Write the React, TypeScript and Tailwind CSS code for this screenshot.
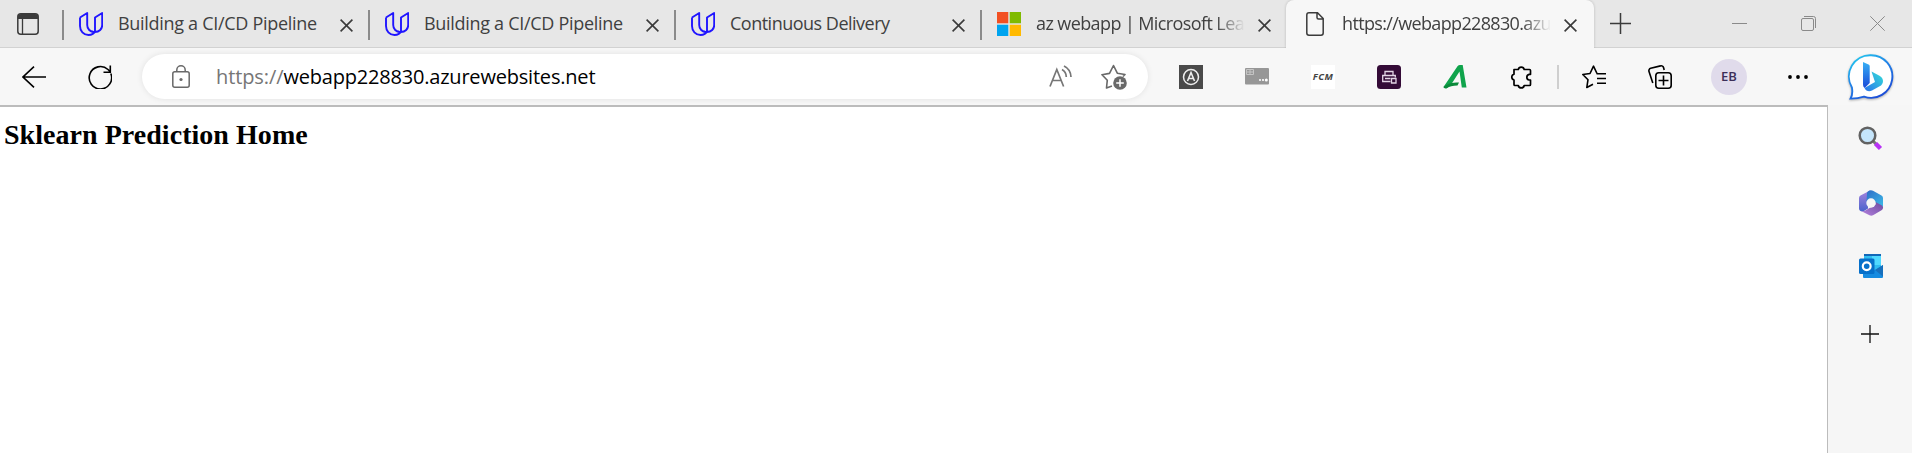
import React from "react";

const UI = "font-['Open_Sans','Noto_Sans',sans-serif]";

function Svg({ w, h, vb, className = "", children }: { w: number; h: number; vb?: string; className?: string; children: React.ReactNode }) {
  return (
    <svg width={w} height={h} viewBox={vb ?? `0 0 ${w} ${h}`} fill="none" className={`block shrink-0 ${className}`}>
      {children}
    </svg>
  );
}

function Udacity() {
  return (
    <Svg w={24} h={24}>
      <path
        d="M1 5.500 8.200 1V13c0 4 3 7 7 7M1 5.500V14c0 5 3.500 9 8.500 9 3.500 0 6-2 7.500-4.500M16 19.500V5.500L23.200 1V13c0 4-3 7-7.200 7-1 0-2-.2-3-.6"
        stroke="#2015ff"
        strokeWidth="1.900"
        strokeLinejoin="round"
      />
    </Svg>
  );
}

function Microsoft() {
  return (
    <Svg w={24} h={24}>
      <path d="M0 0h11.300v11.300H0z" fill="#f25022" />
      <path d="M12.700 0H24v11.300H12.700z" fill="#7fba00" />
      <path d="M0 12.700h11.300V24H0z" fill="#00a4ef" />
      <path d="M12.700 12.700H24V24H12.700z" fill="#ffb900" />
    </Svg>
  );
}

function CloseX() {
  return (
    <Svg w={13} h={13}>
      <path d="M.6.6l11.800 11.800M12.400.6.6 12.400" stroke="#3b3b3b" strokeWidth="1.600" />
    </Svg>
  );
}

function Tab({ icon, title, titleClass = "tracking-[-0.3px]" }: { icon: React.ReactNode; title: string; titleClass?: string }) {
  return (
    <div className="flex h-[47px] w-[306px] shrink-0 items-center">
      <div className="mt-[3px] h-[30px] w-[2px] bg-[#8b8b8b]" />
      <div className="ml-[15px]">{icon}</div>
      <div className={`ml-[15px] w-[210px] overflow-hidden whitespace-nowrap pb-px text-[18px] leading-[28px] text-[#404040] ${titleClass}`}>
        {title}
      </div>
      <div className="ml-[12px] mt-[3px]">
        <CloseX />
      </div>
    </div>
  );
}

function Slot({ className, children }: { className: string; children: React.ReactNode }) {
  return <div className={`flex shrink-0 items-center justify-center ${className}`}>{children}</div>;
}

function TabStrip() {
  return (
    <div className="flex h-12 shrink-0 border-b border-[#d2d2d2] bg-[#e7e7e7]">
      <div className="w-[62px] shrink-0 pl-[17px] pt-[13px]">
        <Svg w={22} h={22}>
          <rect x=".8" y=".8" width="20.400" height="20.400" rx="3" stroke="#3b3b3b" strokeWidth="1.500" />
          <path d="M1 6V4a3 3 0 0 1 3-3h14a3 3 0 0 1 3 3v2z" fill="#3b3b3b" />
          <path d="M5.500 6v15" stroke="#3b3b3b" strokeWidth="1.300" />
        </Svg>
      </div>
      <Tab icon={<Udacity />} title="Building a CI/CD Pipeline" />
      <Tab icon={<Udacity />} title="Building a CI/CD Pipeline" />
      <Tab icon={<Udacity />} title="Continuous Delivery" titleClass="tracking-[-0.500px]" />
      <Tab
        icon={<Microsoft />}
        title="az webapp | Microsoft Learn"
        titleClass="tracking-[-0.6px] [mask-image:linear-gradient(to_right,black_180px,transparent_209px)]"
      />
      <div className="relative flex h-12 w-[308px] shrink-0 items-center rounded-t-[8px] bg-[#f7f7f7] pb-px shadow-[0_0_3px_rgba(0,0,0,0.2)] [clip-path:inset(-4px_-4px_0_-4px)]">
        <div className="ml-[20px]">
          <Svg w={18} h={24}>
            <path d="M3 .8h8.500L17.200 6.500V21a2.200 2.200 0 0 1-2.200 2.200H3A2.200 2.200 0 0 1 .8 21V3A2.200 2.200 0 0 1 3 .8zM11 1v4.500A1.500 1.500 0 0 0 12.500 7H17" stroke="#3b3b3b" strokeWidth="1.500" />
          </Svg>
        </div>
        <div className="ml-[18px] w-[209px] overflow-hidden whitespace-nowrap pb-px text-[18px] leading-[28px] tracking-[-0.65px] text-[#404040] [mask-image:linear-gradient(to_right,black_180px,transparent_209px)]">
          https://webapp228830.azurewebsites.net
        </div>
        <div className="ml-[13px] mt-[3px]">
          <CloseX />
        </div>
      </div>
      <div className="ml-[16px] mt-[13px]">
        <Svg w={21} h={21}>
          <path d="M10.500 0v21M0 10.500h21" stroke="#3b3b3b" strokeWidth="1.500" />
        </Svg>
      </div>
      <div className="ml-auto flex h-[47px] items-center pr-[27px]">
        <Svg w={15} h={15}>
          <path d="M0 7.500h15" stroke="#8a8a8a" />
        </Svg>
        <Svg w={15} h={15} className="ml-[54px]">
          <rect x=".5" y="2.500" width="12" height="12" rx="1.500" stroke="#8a8a8a" />
          <path d="M3 .5h9.500a2 2 0 0 1 2 2V12" stroke="#8a8a8a" />
        </Svg>
        <Svg w={15} h={15} className="ml-[54px]">
          <path d="M.3.3l14.400 14.400M14.700.3.3 14.700" stroke="#8a8a8a" />
        </Svg>
      </div>
    </div>
  );
}

function AddressBar() {
  return (
    <div className="ml-[30px] flex h-[45px] w-[1006px] shrink-0 items-center rounded-full bg-white shadow-[0_0_6px_rgba(0,0,0,0.09)]">
      <Svg w={18} h={23} className="ml-[30px]">
        <rect x=".8" y="6.800" width="16.400" height="15.400" rx="2" stroke="#696969" strokeWidth="1.500" />
        <path d="M4.800 7V5a4.200 4.200 0 0 1 8.400 0v2" stroke="#696969" strokeWidth="1.500" />
        <circle cx="9" cy="14.500" r="1.600" fill="#696969" />
      </Svg>
      <div className="ml-[26px] whitespace-nowrap text-[20px] leading-[30px] tracking-[-0.2px] text-black">
        <span className="tracking-[-0.1px] text-[#767676]">https://</span>webapp228830.azurewebsites.net
      </div>
      <div className="ml-auto flex items-center pr-[21px]">
        <Svg w={24} h={24} className="mr-px">
          <path d="M1 21.500 7.800 4.500 14.600 21.500M3.300 15.500h9M13 4.500c2.500 1.300 4.200 4 4.300 7.500M15 1c4 2 6.800 6 7 11" stroke="#767676" strokeWidth="1.700" />
        </Svg>
        <Svg w={26} h={26} className="ml-[27px]">
          <path d="M11 22l-5.500 2 .8-7.800L1 10.700l7.500-1.300L12.500 1.500l3.800 7.700 7.700 1.300-2 2" stroke="#696969" strokeWidth="1.600" strokeLinejoin="round" />
          <circle cx="19" cy="19" r="6.800" fill="#696969" />
          <path d="M19 15.200v7.600M15.200 19h7.600" stroke="#fff" strokeWidth="1.500" />
        </Svg>
      </div>
    </div>
  );
}

function Bing() {
  return (
    <Svg w={48} h={50} className="drop-shadow-[0_1px_1px_rgba(0,0,0,0.3)]">
      <defs>
        <linearGradient id="ring" x1="0" y1="0" x2=".6" y2="1">
          <stop offset="0" stopColor="#22d3f0" />
          <stop offset=".5" stopColor="#2285e8" />
          <stop offset="1" stopColor="#1c4fd8" />
        </linearGradient>
        <linearGradient id="stem" x1="0" y1="0" x2="0" y2="1">
          <stop offset="0" stopColor="#37b0f5" />
          <stop offset="1" stopColor="#1a49d8" />
        </linearGradient>
        <linearGradient id="bowl" x1="1" y1="0" x2="0" y2="1">
          <stop offset="0" stopColor="#34e0d8" />
          <stop offset="1" stopColor="#2a72ec" />
        </linearGradient>
      </defs>
      <path d="M24 3.200a21.300 21.300 0 1 1-7 41.400c-4 1.300-9 2-13.500 2 1.700-3 2.200-7 1.400-11.200A21.300 21.300 0 0 1 24 3.200z" fill="#fff" stroke="url(#ring)" strokeWidth="1.900" />
      <path d="M16 10l5.500 2.500c.8.400 1.200 1 1.200 2V31l-5 5c-1.200-.9-1.700-2-1.700-4z" fill="url(#stem)" />
      <path d="M24.500 19.500l8 4.300c4 2 4.700 7 1.500 9.600l-9 5.200c-3 1.600-6 .6-7.500-2.500l10.500-6z" fill="url(#bowl)" />
    </Svg>
  );
}

function Toolbar() {
  return (
    <div className="flex h-[57px] shrink-0 items-center bg-[#f7f7f7]">
      <Svg w={24} h={22} className="ml-[22px]">
        <path d="M24 11H1M12 .7 1 11l11 10.300" stroke="#000" strokeWidth="1.600" />
      </Svg>
      <Svg w={24} h={24} className="ml-[42px]">
        <path d="M22.800 8.500A11.200 11.200 0 1 1 20 4.500L22 6.500M22.300.5v6.800h-6.800" stroke="#000" strokeWidth="1.600" />
      </Svg>
      <AddressBar />
      <Slot className="ml-[10px] w-[66px]">
        <Svg w={24} h={24}>
          <path d="M0 0h24v24H0z" fill="#4a4a4a" />
          <circle cx="12" cy="12" r="7.500" stroke="#eee" strokeWidth="1.500" />
          <path d="M8.500 16 12 7.500l3.500 8.500M10 13.500h4" stroke="#eee" strokeWidth="1.600" />
        </Svg>
      </Slot>
      <Slot className="w-[66px]">
        <Svg w={24} h={17}>
          <rect width="24" height="16.500" rx="1" fill="#979797" />
          <path d="M1.500 1.500h7v5h-7zM1.500 4h7M5 1.500v5" stroke="#c5c5c5" />
          <circle cx="15" cy="12" r="1" fill="#fff" />
          <circle cx="18" cy="12" r="1.100" fill="#fff" />
          <circle cx="21.300" cy="12" r="1.500" fill="#fff" />
        </Svg>
      </Slot>
      <Slot className="w-[66px]">
        <div className="flex h-6 w-6 items-center justify-center bg-white text-[9.5px] font-bold italic leading-none tracking-[0.5px] text-[#444]">FCM</div>
      </Slot>
      <Slot className="w-[66px]">
        <Svg w={24} h={24}>
          <rect width="24" height="24" rx="3.500" fill="#340b37" />
          <path d="M8 10.500V6.500h8v4M13.500 16.500H5.700v-6h12.600v2M8 13.500h5.500" stroke="#e3d5e5" strokeWidth="1.300" />
          <path d="M14.500 13.500h4.500v4.500h-4.500z" stroke="#e3d5e5" strokeWidth="1.300" />
        </Svg>
      </Slot>
      <Slot className="w-[66px]">
        <Svg w={24} h={24}>
          <path d="M.5 22 14.500 1.300Q15.500 0 17 0h2.700l3.800 22.500h-4.700L16.500 6.500 8.500 19 3.500 23.500Z" fill="#10a44c" />
          <path d="M.5 22c3.500-3.300 8-4.500 15.500-4.500l-1.500 3c-5 0-8 1-10.500 2.500-1.500.8-3 .5-3.500-1z" fill="#0b8a3b" />
        </Svg>
      </Slot>
      <Slot className="w-[66px]">
        <Svg w={24} h={24}>
          <path
            d="M5 4.500h4.300a3 3 0 0 1 5.900 0h5.300a1 1 0 0 1 1 1v3.800h-1.300a2.900 2.900 0 0 0 0 5.700h1.300v4.500a1 1 0 0 1-1 1h-5.300a3 3 0 0 1-5.900 0H6a1 1 0 0 1-1-1V15a3 3 0 0 1 0-5.800z"
            stroke="#000"
            strokeWidth="1.700"
            strokeLinejoin="round"
          />
        </Svg>
      </Slot>
      <div className="ml-[3px] h-6 w-[2px] bg-[#cfcfcf]" />
      <Slot className="ml-[2px] w-[66px]">
        <Svg w={24} h={24}>
          <path d="M15 8.500 11.500 1.200 8 8.500l-7.200 1 5.200 5.200-1.200 7.800 6.200-3.300M14.500 8.800H24M15 13.500h9M15 18.200h9" stroke="#000" strokeWidth="1.600" strokeLinejoin="round" />
        </Svg>
      </Slot>
      <Slot className="w-[66px]">
        <Svg w={24} h={24}>
          <rect x="7.800" y="7.800" width="15.400" height="15.400" rx="3" stroke="#000" strokeWidth="1.600" />
          <path d="M15.500 10.500v10M10.500 15.500h10M4.800 18 1 6.500A2.500 2.500 0 0 1 2.700 3.300L12.500.9A2.500 2.500 0 0 1 15.600 2.700L16.200 5" stroke="#000" strokeWidth="1.600" />
        </Svg>
      </Slot>
      <Slot className="ml-[3px] w-[66px]">
        <div className="flex h-9 w-9 items-center justify-center rounded-full bg-[#e0dbeb] text-[13px] font-semibold leading-none text-[#3b2e58]">EB</div>
      </Slot>
      <Slot className="ml-[3px] w-[66px]">
        <Svg w={20} h={4}>
          <circle cx="2" cy="2" r="1.900" fill="#000" />
          <circle cx="10" cy="2" r="1.900" fill="#000" />
          <circle cx="18" cy="2" r="1.900" fill="#000" />
        </Svg>
      </Slot>
      <div className="ml-[16px]">
        <Bing />
      </div>
    </div>
  );
}

function Sidebar() {
  return (
    <div className="flex w-[84px] shrink-0 flex-col items-center bg-[#f6f6f6] pt-[21px]">
      <Svg w={25} h={25}>
        <path d="M15.500 15.500l2.500 2.500" stroke="#777" strokeWidth="3" />
        <path d="M17.500 17.500l5 5" stroke="#b832f5" strokeWidth="4.500" />
        <circle cx="9.500" cy="9.500" r="7.800" fill="#c5e5fb" stroke="#626262" strokeWidth="2.500" />
      </Svg>
      <Svg w={26} h={26} className="ml-[2px] mt-[39px]">
        <defs>
          <linearGradient id="m1" x1="0" y1="0" x2="0" y2="1">
            <stop offset="0" stopColor="#a684df" />
            <stop offset="1" stopColor="#4b63cc" />
          </linearGradient>
          <linearGradient id="m2" x1="0" y1="0" x2="1" y2="1">
            <stop offset="0" stopColor="#2d6cc7" />
            <stop offset="1" stopColor="#3cbbe8" />
          </linearGradient>
          <linearGradient id="m3" x1="0" y1="1" x2="1" y2="0">
            <stop offset="0" stopColor="#b583df" />
            <stop offset="1" stopColor="#6b499f" />
          </linearGradient>
        </defs>
        <path d="M12.500.3 2.500 5.500A3 3 0 0 0 1 8v10.500c0 2.500 3 3.500 5 2.500l4-2.500V4z" fill="url(#m1)" />
        <path d="M9 3Q9.500.8 13 .3q1 0 2 .5l8.500 4.700A3 3 0 0 1 25 8v9L13 10.500 8.500 12z" fill="url(#m2)" />
        <path d="M3 21q3 1 6-1.500l8.500-5V12l6.500 3.500c1.500 1 1.500 3.500-.5 4.800l-8.500 5a4 4 0 0 1-3.500 0z" fill="url(#m3)" />
        <circle cx="13" cy="13" r="4.700" fill="#f6f6f6" />
      </Svg>
      <Svg w={24} h={24} className="ml-[2px] mt-[38px]">
        <path d="M5 1a1 1 0 0 1 1-1h15a1 1 0 0 1 1 1v16H5z" fill="#31bdf1" />
        <path d="M5 0h17v2H5z" fill="#1268b8" />
        <path d="M13 2h9v9h-9z" fill="#50d9ff" />
        <path d="M4 13l12 3 8-5v12a1 1 0 0 1-1 1H5a1 1 0 0 1-1-1z" fill="#168be0" />
        <path d="M16 16l8-5v11.500z" fill="#1770bd" />
        <rect y="4.500" width="15.500" height="15.500" rx="1.500" fill="#0670ca" />
        <circle cx="7.700" cy="12.200" r="3.900" stroke="#fff" strokeWidth="2.200" />
      </Svg>
      <Svg w={18} h={18} className="mr-px mt-[47px]">
        <path d="M9 0v18M0 9h18" stroke="#111" strokeWidth="1.300" />
      </Svg>
    </div>
  );
}

export default function App() {
  return (
    <div className={`flex h-[453px] w-[1912px] flex-col overflow-hidden bg-[#f7f7f7] ${UI}`}>
      <TabStrip />
      <Toolbar />
      <div className="flex min-h-0 flex-1">
        <main className="flex-1 border-r border-t-2 border-[#bcbcbc] bg-white">
          <h2 className="ml-[4px] mt-[12px] whitespace-nowrap font-['Liberation_Serif',serif] text-[28px] font-bold leading-8 tracking-[0.04px] text-black">
            Sklearn Prediction Home
          </h2>
        </main>
        <Sidebar />
      </div>
    </div>
  );
}
